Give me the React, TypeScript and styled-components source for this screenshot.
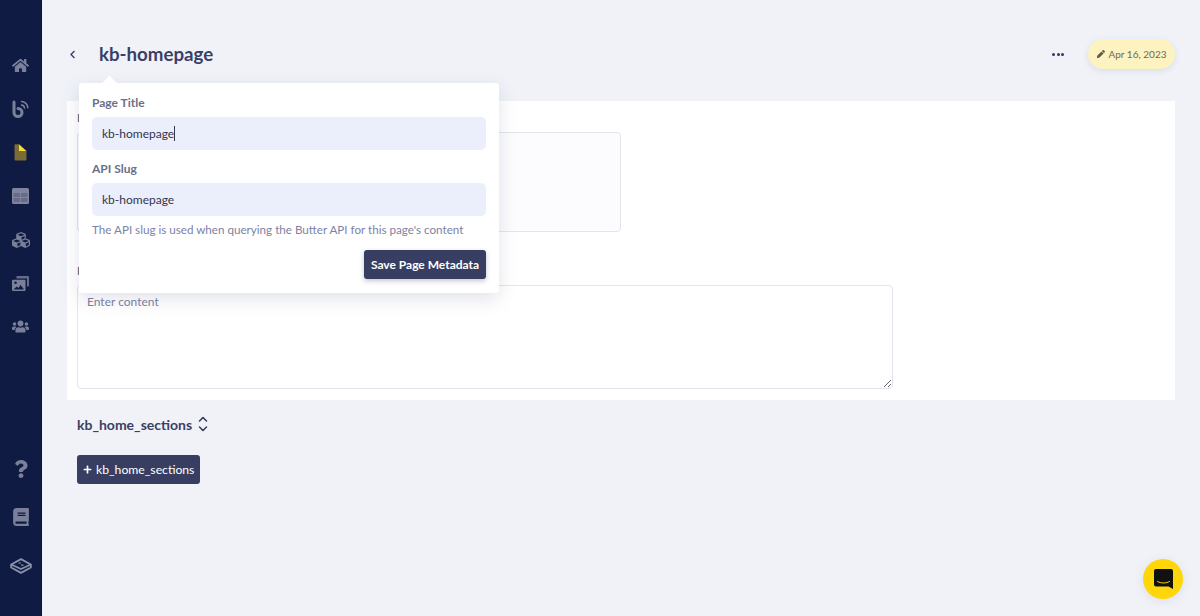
import * as React from "react";
import styled, { createGlobalStyle } from "styled-components";
import { FaHome, FaCubes, FaUsers, FaQuestion, FaBook, FaChevronLeft, FaPlus, FaPen } from "react-icons/fa";

const GlobalStyle = createGlobalStyle`
  html, body {
    margin: 0;
    height: 100%;
    background: #f0f2f8;
    font-family: "Lato", "Liberation Sans", sans-serif;
  }
  * { box-sizing: border-box; }
`;

const Page = styled.div`
  position: relative;
  display: flex;
  width: 1200px;
  height: 616px;
  overflow: hidden;
  background: #f0f2f8;
`;

const Sidebar = styled.nav`
  width: 42px;
  flex: none;
  display: flex;
  flex-direction: column;
  justify-content: space-between;
  padding: 44px 0 26px;
  background: #0f1b43;
  border-right: 1px solid #0b1535;
`;

const NavGroup = styled.div`
  display: flex;
  flex-direction: column;
`;

const NavIcon = styled.div`
  height: ${props => props.$h}px;
  display: flex;
  align-items: center;
  justify-content: center;
  color: #7a809a;
  font-size: ${props => props.$size || 17}px;
`;

const Main = styled.main`
  flex: 1;
  padding: 0 25px;
`;

const Header = styled.header`
  height: 101px;
  display: flex;
  align-items: center;
  padding-top: 7px;
`;

const BackButton = styled.span`
  width: 32px;
  color: #3a3f63;
  font-size: 9px;
  display: flex;
  padding-left: 1px;
`;

const Title = styled.h1`
  margin: 0;
  flex: 1;
  font-size: 18.7px;
  font-weight: 700;
  color: #3a3f68;
`;

const Dots = styled.span`
  display: flex;
  gap: 1.5px;
  margin-right: 24px;
  i {
    width: 3px;
    height: 3px;
    border-radius: 50%;
    background: #33385f;
  }
`;

const DatePill = styled.div`
  width: 87px;
  height: 30px;
  border-radius: 15px;
  display: flex;
  align-items: center;
  justify-content: center;
  gap: 4px;
  background: #fdf3c0;
  color: #6f6a55;
  font-size: 10px;
  box-shadow: 0 2px 6px rgba(120, 120, 150, 0.16);
  svg { font-size: 8px; color: #5f5a44; }
`;

const Panel = styled.section`
  height: 299px;
  padding: 9px 10px 0;
  background: #fff;
`;

const FieldLabel = styled.div`
  font-size: 12px;
  font-weight: 700;
  line-height: 16px;
  color: #5d6280;
  margin-bottom: 6px;
`;

const TextArea = styled.textarea`
  display: block;
  width: ${props => props.$w}px;
  height: ${props => props.$h}px;
  margin-bottom: ${props => props.$mb}px;
  padding: 8px 9px;
  border: 1px solid #e2e4ee;
  border-radius: 4px;
  background: ${props => props.$bg};
  font: 12px "Lato", "Liberation Sans", sans-serif;
  resize: ${props => props.$resize};
  outline: none;
  &::placeholder { color: #7a80a3; opacity: 1; }
`;

const SectionRow = styled.div`
  display: flex;
  align-items: center;
  gap: 6px;
  margin: 15px 0 0 10px;
  height: 18px;
  font-size: 14px;
  font-weight: 700;
  color: #3a3f63;
`;

const AddButton = styled.button`
  display: flex;
  align-items: center;
  gap: 4px;
  margin: 22px 0 0 10px;
  width: 123px;
  height: 29px;
  padding: 0 0 0 6px;
  border: none;
  border-radius: 3px;
  background: #383e62;
  color: #fff;
  font: 12.2px "Lato", "Liberation Sans", sans-serif;
  white-space: nowrap;
  svg { font-size: 9px; }
`;

const Popover = styled.div`
  position: absolute;
  left: 79px;
  top: 83px;
  width: 420px;
  height: 210px;
  padding: 12px 13px 0;
  background: #fff;
  border-radius: 3px;
  box-shadow: 0 6px 18px rgba(110, 115, 150, 0.2);
  &::before {
    content: "";
    position: absolute;
    left: 25px;
    top: -5px;
    width: 11px;
    height: 11px;
    background: #fff;
    transform: rotate(45deg);
  }
`;

const PopLabel = styled.div`
  position: relative;
  font-size: 12px;
  font-weight: 700;
  line-height: 16px;
  color: #6b7089;
  margin-bottom: 6px;
`;

const FieldBox = styled.div`
  height: 33px;
  margin-bottom: ${props => props.$mb}px;
  padding: 0 10px;
  display: flex;
  align-items: center;
  border-radius: 5px;
  background: #ebeffb;
  color: #32364f;
  font-size: 12px;
`;

const Caret = styled.span`
  width: 1px;
  height: 15px;
  background: #32364f;
`;

const Hint = styled.p`
  margin: 7px 0 13px;
  font-size: 11.65px;
  line-height: 14px;
  white-space: nowrap;
  color: #7c82a5;
`;

const SaveRow = styled.div`
  display: flex;
  justify-content: flex-end;
`;

const SaveButton = styled.button`
  height: 29px;
  width: 122px;
  padding: 0;
  border: none;
  border-radius: 3px;
  background: #383e62;
  color: #fff;
  font: 700 12px "Lato", "Liberation Sans", sans-serif;
  box-shadow: 0 2px 5px rgba(60, 65, 100, 0.3);
`;

const ChatBubble = styled.div`
  position: absolute;
  left: 1143px;
  top: 559px;
  width: 40px;
  height: 40px;
  border-radius: 50%;
  background: #ffd60a;
  display: flex;
  align-items: center;
  justify-content: center;
  box-shadow: 0 2px 10px rgba(120, 120, 150, 0.15);
`;

const BlogIcon = () => (
  <svg width="17" height="18" viewBox="0 0 17 18" fill="none" stroke="currentColor" strokeLinecap="round">
    <path d="M2 2v10.500a4 4 0 1 0 4-4" strokeWidth="3" />
    <path d="M9.500 1.500a6.500 6.500 0 0 1 6.300 6.300" strokeWidth="1.500" />
    <path d="M9.500 5a3.300 3.300 0 0 1 3 3" strokeWidth="1.500" />
  </svg>
);

const PageIcon = () => (
  <svg width="13" height="17" viewBox="0 0 13 17">
    <path d="M0.500 1a.8.8 0 0 1 .8-.8H5V7H12.500V15.600a.8.8 0 0 1-.8.8H1.300a.8.8 0 0 1-.8-.8z" fill="#7b6b35" />
    <path d="M5 0.200L12.500 7H5z" fill="#f6dc2e" />
  </svg>
);

const TableIcon = () => (
  <svg width="17" height="16" viewBox="0 0 17 16">
    <rect width="17" height="16" rx="1.500" fill="#80859d" />
    <rect x="1.500" y="5" width="6.500" height="4" fill="#676d88" />
    <rect x="9" y="5" width="6.500" height="4" fill="#676d88" />
    <rect x="1.500" y="10" width="6.500" height="4" fill="#676d88" />
    <rect x="9" y="10" width="6.500" height="4" fill="#676d88" />
  </svg>
);

const MediaIcon = () => (
  <svg width="17" height="15" viewBox="0 0 17 15" fill="currentColor">
    <path d="M4.500 0h11.500a1 1 0 0 1 1 1V9.500a1 1 0 0 1-1 1h-1V2.500H4.500z" opacity=".8" />
    <path fillRule="evenodd" d="M1 3.800h11.500a1 1 0 0 1 1 1V14a1 1 0 0 1-1 1H1a1 1 0 0 1-1-1V4.800a1 1 0 0 1 1-1zM1.500 13.500h10.500l-3.300-4.500-2.400 3-1.500-1.500zM3.500 5.500a1.300 1.300 0 1 0 0 2.600 1.300 1.300 0 0 0 0-2.600z" />
  </svg>
);

const StackLogo = () => (
  <svg width="22" height="16" viewBox="0 0 22 16" fill="none" stroke="#8a90a8" strokeWidth="1.900" strokeLinejoin="round">
    <path d="M11 1.200L20.800 6.500 11 11 1.200 6.500z" />
    <path d="M1.200 6.500V9.500L11 14.800 20.800 9.500V6.500" />
    <path d="M8.500 5h2.500M11 7.200h2.500" strokeWidth="1.200" />
  </svg>
);

const SortIcon = () => (
  <svg width="10" height="16" viewBox="0 0 10 16" fill="none" stroke="#33385f" strokeWidth="1.500" strokeLinecap="round" strokeLinejoin="round">
    <path d="M1.500 5L5 1.500 8.500 5" />
    <path d="M1.500 11L5 14.500 8.500 11" />
  </svg>
);

const ChatIcon = () => (
  <svg width="19" height="20" viewBox="0 0 19 20">
    <path d="M2 0h15a2 2 0 0 1 2 2v18l-4.500-2.500H2a2 2 0 0 1-2-2V2a2 2 0 0 1 2-2z" fill="#111" />
    <path d="M3.500 12.500c3.500 2 8.500 2 12 0" fill="none" stroke="#ffd60a" strokeWidth="1" strokeLinecap="round" />
  </svg>
);

export default function App() {
  return (
    <Page>
      <GlobalStyle />
      <Sidebar>
        <NavGroup>
          <NavIcon $h={43.5}><FaHome /></NavIcon>
          <NavIcon $h={43.5}><BlogIcon /></NavIcon>
          <NavIcon $h={43.5}><PageIcon /></NavIcon>
          <NavIcon $h={43.5}><TableIcon /></NavIcon>
          <NavIcon $h={43.5} $size={18}><FaCubes /></NavIcon>
          <NavIcon $h={43.5}><MediaIcon /></NavIcon>
          <NavIcon $h={43.5}><FaUsers /></NavIcon>
        </NavGroup>
        <NavGroup>
          <NavIcon $h={48.5} $size={18}><FaQuestion /></NavIcon>
          <NavIcon $h={48.5} $size={18}><FaBook /></NavIcon>
          <NavIcon $h={48.5}><StackLogo /></NavIcon>
        </NavGroup>
      </Sidebar>
      <Main>
        <Header>
          <BackButton><FaChevronLeft /></BackButton>
          <Title>kb-homepage</Title>
          <Dots><i /><i /><i /></Dots>
          <DatePill><FaPen />Apr 16, 2023</DatePill>
        </Header>
        <Panel>
          <FieldLabel>Description</FieldLabel>
          <TextArea $w={544} $h={100} $mb={31} $resize="none" $bg="#fcfcfe" />
          <FieldLabel>Headline</FieldLabel>
          <TextArea $w={816} $h={104} $mb={0} $resize="both" $bg="#ffffff" placeholder="Enter content" />
        </Panel>
        <SectionRow>kb_home_sections <SortIcon /></SectionRow>
        <AddButton><FaPlus />kb_home_sections</AddButton>
      </Main>
      <Popover>
        <PopLabel>Page Title</PopLabel>
        <FieldBox $mb={11}>kb-homepage<Caret /></FieldBox>
        <PopLabel>API Slug</PopLabel>
        <FieldBox $mb={0}>kb-homepage</FieldBox>
        <Hint>The API slug is used when querying the Butter API for this page's content</Hint>
        <SaveRow><SaveButton>Save Page Metadata</SaveButton></SaveRow>
      </Popover>
      <ChatBubble><ChatIcon /></ChatBubble>
    </Page>
  );
}
